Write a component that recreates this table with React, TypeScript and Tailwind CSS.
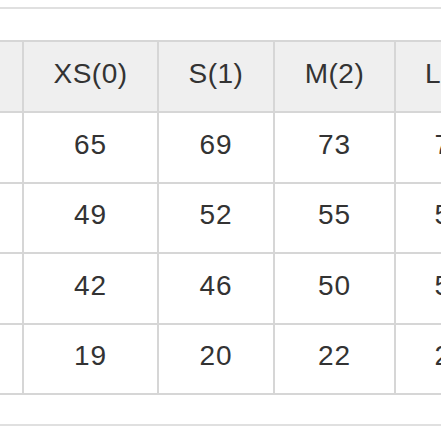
const header = ["", "XS(0)", "S(1)", "M(2)", "L(3)"];
const rows = [
  ["", "65", "69", "73", "77"],
  ["", "49", "52", "55", "58"],
  ["", "42", "46", "50", "54"],
  ["", "19", "20", "22", "24"],
];
const heights = ["h-[69px]", "h-[69px]", "h-[68px]", "h-[69px]", "h-[68px]"];

const App = () => {
  return (
    <div
      className="w-[441px] h-[441px] overflow-hidden bg-white text-[#333]"
      style={{ fontFamily: '"Liberation Sans", "Noto Sans CJK JP", sans-serif' }}
    >
      <div className="h-[7px]" />
      <div className="h-[2px] bg-[#e0e0e0]" />
      <div className="h-[31px]" />
      <div className="ml-[-80px] w-[590px] grid grid-cols-[100px_133px_114px_119px_110px] gap-[2px] bg-[#d6d6d6] border-[2px] border-[#d6d6d6]">
        {header.map((h, i) => (
          <div
            key={i}
            className={`${heights[0]} bg-[#efefef] flex items-center justify-center pb-[5px] text-[28px] tracking-[0.5px]`}
          >
            {h}
          </div>
        ))}
        {rows.map((r, ri) =>
          r.map((c, ci) => (
            <div
              key={ri + "-" + ci}
              className={`${heights[ri + 1]} bg-white flex items-center justify-center pb-[6px] text-[28px] tracking-[1px]`}
            >
              {c}
            </div>
          ))
        )}
      </div>
      <div className="h-[29px]" />
      <div className="h-[2px] bg-[#e0e0e0]" />
    </div>
  );
};

export default App;
